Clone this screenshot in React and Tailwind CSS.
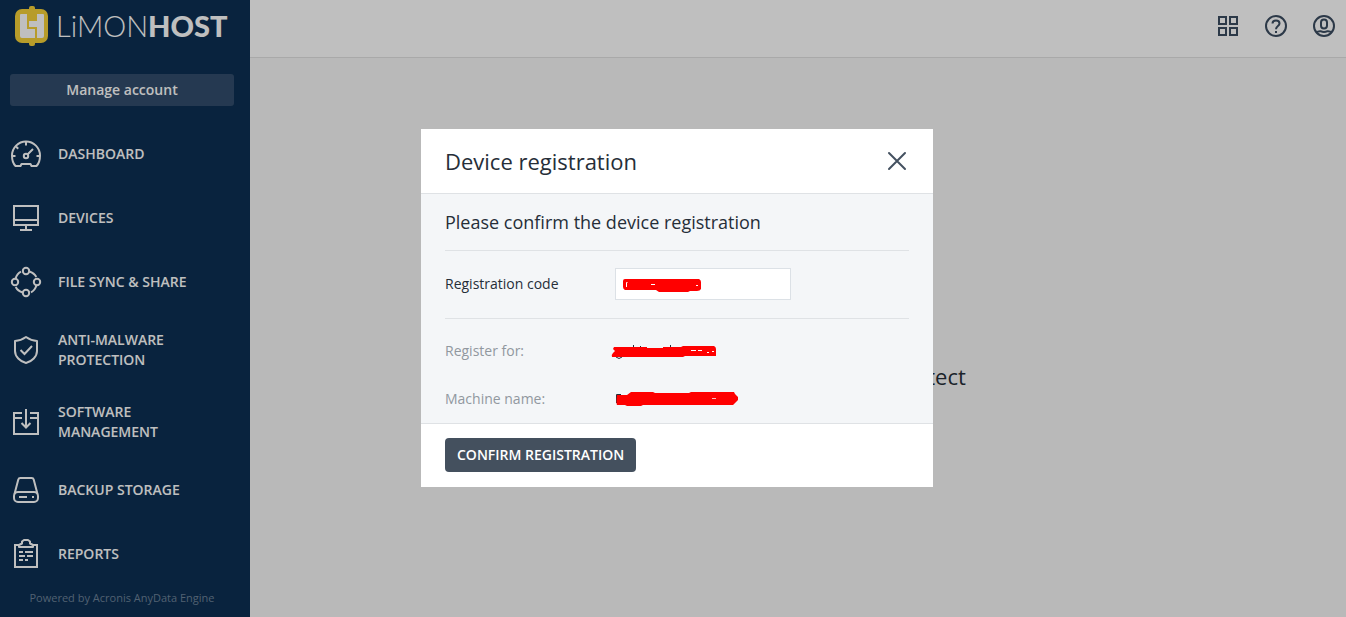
import React from "react";

const DashboardIcon = () => (
  <svg className="h-8 w-8 shrink-0" viewBox="0 0 32 32" fill="none" stroke="currentColor" strokeWidth="2" aria-hidden="true">
    <path d="M5.500 29C3 26.500 2 22 2 18.500A14 14 0 0 1 30 18.500C30 22 29 26.500 26.500 29H21.500L20.500 27H11.500L10.500 29Z" transform="translate(0 -1)" strokeLinejoin="round" />
    <path d="M16 4v3.500M2 18h3.500M30 18h-3.500M6 8.500l2.200 2.200M17.500 16.500l5.500-5.500" />
    <circle cx="16" cy="18" r="2.200" />
  </svg>
);

const DevicesIcon = () => (
  <svg className="h-8 w-8 shrink-0" viewBox="0 0 32 32" fill="none" stroke="currentColor" strokeWidth="2" aria-hidden="true">
    <path d="M4 4h24v19H4zM4 18h24M16 23v5M10 28h12" />
  </svg>
);

const SyncIcon = () => (
  <svg className="h-8 w-8 shrink-0" viewBox="0 0 32 32" fill="none" stroke="currentColor" strokeWidth="2" aria-hidden="true">
    <circle cx="16" cy="5" r="3.200" />
    <circle cx="27" cy="16" r="3.200" />
    <circle cx="16" cy="27" r="3.200" />
    <circle cx="5" cy="16" r="3.200" />
    <path d="M19.200 5.500C22.500 6.500 25 8.500 26.300 11M26.500 19.200C25.500 22.500 23.500 25 21 26.300M12.800 26.500C9.500 25.500 7 23.500 5.700 21M5.500 12.800C6.500 9.500 8.500 7 11 5.700" />
  </svg>
);

const ShieldIcon = () => (
  <svg className="h-8 w-8 shrink-0" viewBox="0 0 32 32" fill="none" stroke="currentColor" strokeWidth="2" aria-hidden="true">
    <path d="M16 3C12.500 5.500 8.500 6.800 5 7V17C5 22.500 10 27.500 16 29C22 27.500 27 22.500 27 17V7C23.500 6.800 19.500 5.500 16 3Z" strokeLinejoin="round" />
    <path d="M10.500 16l4 4 7.500-8" />
  </svg>
);

const SoftwareIcon = () => (
  <svg className="h-8 w-8 shrink-0" viewBox="0 0 32 32" fill="none" stroke="currentColor" strokeWidth="2" aria-hidden="true">
    <path d="M12 7H4v21h24V7h-8M4 12h8M20 12h8M16 3v18M11.500 17l4.500 4.500 4.500-4.500" />
  </svg>
);

const StorageIcon = () => (
  <svg className="h-8 w-8 shrink-0" viewBox="0 0 32 32" fill="none" stroke="currentColor" strokeWidth="2" aria-hidden="true">
    <path d="M4.500 20L8.300 5.500Q8.700 4 10.300 4H21.700Q23.300 4 23.700 5.500L27.500 20" />
    <rect x="4" y="18" width="24" height="10" rx="4" />
    <path d="M9 23h8M22 23h2" />
  </svg>
);

const ReportsIcon = () => (
  <svg className="h-8 w-8 shrink-0" viewBox="0 0 32 32" fill="none" stroke="currentColor" strokeWidth="2" aria-hidden="true">
    <path d="M9 7H5v22h22V7h-4" />
    <path d="M9 9V7l3-1.500V3.500L14 2h4l2 1.500V5.500L23 7v2z" strokeLinejoin="round" />
    <path d="M9 14h4M15 14h8M9 18h6M17 18h6M9 22h4M15 22h3" />
  </svg>
);

const NAV_ITEMS = [
  { label: "DASHBOARD", icon: DashboardIcon },
  { label: "DEVICES", icon: DevicesIcon },
  { label: "FILE SYNC & SHARE", icon: SyncIcon },
  { label: "ANTI-MALWARE PROTECTION", icon: ShieldIcon },
  { label: "SOFTWARE MANAGEMENT", icon: SoftwareIcon },
  { label: "BACKUP STORAGE", icon: StorageIcon },
  { label: "REPORTS", icon: ReportsIcon },
];

const Logo = () => (
  <a href="#" className="flex h-[42px] items-center gap-[6px] pl-1 text-white">
    <svg className="h-[42px] w-[36px] shrink-0" viewBox="0 0 36 42" aria-hidden="true">
      <rect x="15" y="1" width="6" height="40" rx="2" fill="#f5d038" />
      <rect x="1" y="4" width="33" height="34" rx="7" fill="#f5d038" />
      <path d="M7 9h6v15h8v9H8q-2 0-2-2V10q0-1 1-1zM23 9h6q1 0 1 1v21q0 2-2 2h-5V22h-8v-6h8z" fill="#fff" />
    </svg>
    <span className="font-['Lato',sans-serif] text-[29px] leading-10">
      <span className="font-light">LiMON</span>
      <span className="font-black">HOST</span>
    </span>
  </a>
);

const Sidebar = () => (
  <aside className="flex w-[250px] shrink-0 flex-col bg-[#0c2f53] pl-[10px] pr-4 pt-[5px] text-white">
    <Logo />
    <button type="button" className="mt-[27px] mb-4 h-8 w-full rounded-[3px] bg-[#324d6c] text-sm font-semibold">
      Manage account
    </button>
    <nav>
      {NAV_ITEMS.map(({ label, icon: Icon }) => (
        <a key={label} href="#" className="flex items-center gap-4 py-4 text-sm leading-5 font-semibold">
          <Icon />
          <span className="max-w-[140px]">{label}</span>
        </a>
      ))}
    </nav>
    <p className="pt-1 text-center text-[11px] leading-4 text-[#6d8298]">Powered by Acronis AnyData Engine</p>
  </aside>
);

const TopBar = () => (
  <header className="flex h-[58px] justify-end gap-6 border-b border-[#e2e2e2] bg-white pt-[14px] pr-[10px] text-[#3b4c60]">
    <button type="button" aria-label="Applications" className="h-6 w-6">
      <svg viewBox="0 0 24 24" fill="none" stroke="currentColor" strokeWidth="2">
        <path d="M3 3h7v7H3zM14 3h7v7h-7zM3 14h7v7H3zM14 14h7v7h-7z" />
      </svg>
    </button>
    <button type="button" aria-label="Help" className="h-6 w-6">
      <svg viewBox="0 0 24 24" fill="none" stroke="currentColor" strokeWidth="2">
        <circle cx="12" cy="12" r="10" />
        <path d="M8.500 9.500C8.500 5.500 15.500 5.500 15.500 9.500C15.500 12 12 12 12 15.200M12 17v2" />
      </svg>
    </button>
    <button type="button" aria-label="Account" className="h-6 w-6">
      <svg viewBox="0 0 24 24" fill="none" stroke="currentColor" strokeWidth="2">
        <circle cx="12" cy="12" r="10" />
        <rect x="9" y="5.500" width="6" height="9" rx="3" />
        <path d="M4 18.500Q6 17 8.500 17.200Q12 18.800 15.500 17.200Q18 17 20 18.500" />
      </svg>
    </button>
  </header>
);

const RegistrationDialog = () => (
  <section role="dialog" aria-modal="true" aria-labelledby="dialog-title" className="w-full max-w-[512px] bg-white text-[#262e38]">
    <header className="flex h-[65px] items-center justify-between border-b border-[#dfe2e5] px-6">
      <h1 id="dialog-title" className="text-[22px] leading-8">Device registration</h1>
      <button type="button" aria-label="Close" className="h-6 w-6 text-[#445160]">
        <svg viewBox="0 0 24 24" fill="none" stroke="currentColor" strokeWidth="2" strokeLinecap="round">
          <path d="M4 4l16 16M20 4L4 20" />
        </svg>
      </button>
    </header>

    <div className="bg-[#f4f6f8] px-6">
      <h2 className="flex h-[57px] items-center border-b border-[#dfe2e5] text-lg">Please confirm the device registration</h2>
      <div className="flex h-[68px] items-center border-b border-[#dfe2e5] text-sm">
        <label htmlFor="code" className="w-[170px] shrink-0">Registration code</label>
        <div className="relative">
          <input id="code" type="text" className="block h-8 w-44 border border-[#dce1e6] bg-white px-2" />
          {/* redaction over the code */}
          <svg className="pointer-events-none absolute top-2 left-2 h-4 w-20" viewBox="0 0 80 16" aria-hidden="true">
            <path d="M2 3H76Q78 4 78 6V13Q77 15 74 15H67L65 16H36L33 14H2Q0 13 0 11V5Q0 3 2 3Z" fill="red" />
            <path d="M4.500 6.500H3.500V11M28 8.500h4M73 9.500h2" stroke="#fff" fill="none" />
          </svg>
        </div>
      </div>

      <dl className="pt-2 text-sm text-[#91989f]">
        <div className="flex h-12 items-center">
          <dt className="w-[166px] shrink-0">Register for:</dt>
          <dd>
            <svg className="h-4 w-[108px]" viewBox="0 0 108 16" role="img" aria-label="Hidden">
              <path d="M22.500 2v3M29.500 3v2M59.500 2v3M5 14Q8 17 11 14" stroke="#262e38" fill="none" />
              <path d="M3 4H36V5H52V4H70L72 3H103Q105 4 105 6V13H74L72 14H1Q0 12 2 10L4 8L2 6Z" fill="red" />
              <path d="M80 7.500h5M87 7.500h4M96 9.500h2M101 8.500h2" stroke="#fff" />
            </svg>
          </dd>
        </div>
        <div className="flex h-12 items-center">
          <dt className="w-[170px] shrink-0">Machine name:</dt>
          <dd>
            <svg className="h-4 w-[124px]" viewBox="0 0 124 16" role="img" aria-label="Hidden">
              <path d="M1.500 12V3.500H6" stroke="#262e38" fill="none" />
              <path d="M2 4H12L16 1H38L40 2H74L76 1H119L120 3L123 6V9L118 14H28L26 15H12L10 14H2Q1 12 2 4Z" fill="red" />
              <path d="M97 7.500h4" stroke="#fbb" />
            </svg>
          </dd>
        </div>
      </dl>
    </div>

    <footer className="flex h-16 items-center border-t border-[#dfe2e5] px-6">
      <button type="button" className="rounded bg-[#44505e] px-3 py-[7px] text-sm leading-5 font-semibold text-white">
        CONFIRM REGISTRATION
      </button>
    </footer>
  </section>
);

export default function App() {
  return (
    <div className="flex min-h-screen bg-[#f7f7f7] font-['Open_Sans',sans-serif]">
      <Sidebar />
      <main className="flex min-w-0 flex-1 flex-col">
        <TopBar />
        <div className="flex flex-1 items-center justify-center pt-[78px] pr-1 text-[22px] text-[#262e38]">
          Choose what you want to protect
        </div>
      </main>

      <div className="fixed inset-0 flex items-center justify-center bg-black/25 pb-0.5 pl-2">
        <RegistrationDialog />
      </div>
    </div>
  );
}
